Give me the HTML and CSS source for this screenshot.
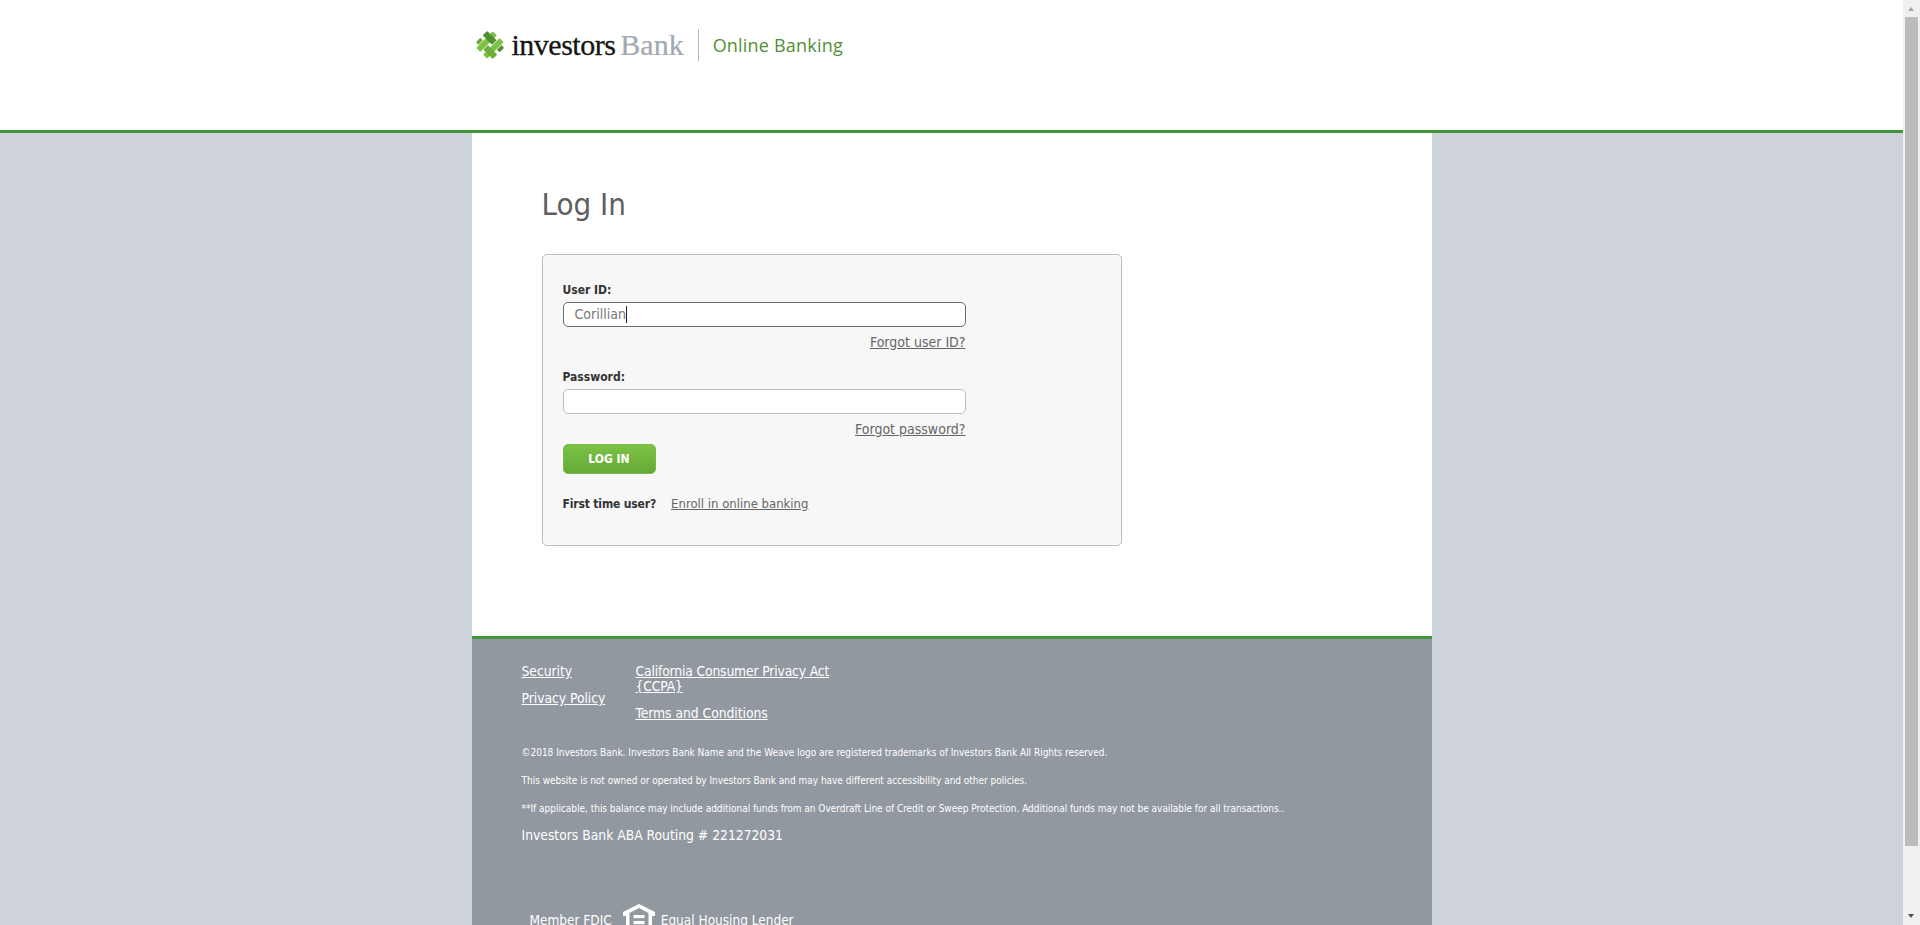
FILE: index.html
```html
<!DOCTYPE html>
<html lang="en">
<head>
<meta charset="utf-8">
<title>Investors Bank Online Banking - Log In</title>
<link rel="stylesheet" href="styles.css">
</head>
<body>
<div class="window">
  <div class="page">
    <header class="topbar">
      <div class="column brand">
        <svg class="weave" viewBox="0 0 30 30" aria-hidden="true">
          <g transform="rotate(45 15 15)">
            <rect x="3" y="7" width="24" height="6.4" rx="1.2" fill="#4f8f2f"/>
            <rect x="3" y="16.6" width="24" height="6.4" rx="1.2" fill="#6cae39"/>
            <rect x="16.6" y="3" width="6.4" height="24" rx="1.2" fill="#7dc242" stroke="#fff" stroke-width="0.8"/>
            <rect x="7" y="3" width="6.4" height="24" rx="1.2" fill="#7dc242" stroke="#fff" stroke-width="0.8"/>
            <rect x="6.4" y="7" width="7.6" height="6.4" fill="#4f8f2f"/>
            <rect x="16" y="16.6" width="7.6" height="6.4" fill="#6cae39"/>
          </g>
        </svg>
        <span class="wordmark"><span class="wm-dark">investors</span><span class="wm-grey">Bank</span></span>
        <span class="divider"></span>
        <span class="product">Online Banking</span>
      </div>
    </header>
    <main class="column content">
      <h1 class="title">Log In</h1>
      <form class="card">
        <label class="label">User ID:</label>
        <div class="field field-focus"><span class="typed">Corillian</span><span class="caret"></span></div>
        <div class="forgot"><a href="#">Forgot user ID?</a></div>
        <label class="label label-second">Password:</label>
        <div class="field"></div>
        <div class="forgot"><a href="#">Forgot password?</a></div>
        <button class="login" type="button">LOG IN</button>
        <div class="first"><strong>First time user?</strong><a href="#">Enroll in online banking</a></div>
      </form>
    </main>
    <footer class="column footer">
      <div class="links">
        <ul class="linkcol linkcol-a">
          <li><a href="#">Security</a></li>
          <li><a href="#">Privacy Policy</a></li>
        </ul>
        <ul class="linkcol linkcol-b">
          <li class="tight"><a href="#">California Consumer Privacy Act {CCPA}</a></li>
          <li><a href="#">Terms and Conditions</a></li>
        </ul>
      </div>
      <div class="legal-group">
        <p class="legal">©2018 Investors Bank. Investors Bank Name and the Weave logo are registered trademarks of Investors Bank All Rights reserved.</p>
        <p class="legal">This website is not owned or operated by Investors Bank and may have different accessibility and other policies.</p>
        <p class="legal">**If applicable, this balance may include additional funds from an Overdraft Line of Credit or Sweep Protection. Additional funds may not be available for all transactions..</p>
      </div>
      <p class="routing">Investors Bank ABA Routing # 221272031</p>
      <div class="badges">
        <span class="badge-text">Member FDIC</span>
        <svg class="ehl" viewBox="0 0 32 28" aria-hidden="true">
          <path d="M16 0 L32 8 V12 H29 V28 H3 V12 H0 V8 Z M16 4 L6.5 9 V24.5 H25.5 V9 Z" fill="#fff" fill-rule="evenodd"/>
          <rect x="10.5" y="11" width="11" height="3.2" fill="#fff"/>
          <rect x="10.5" y="17" width="11" height="3.2" fill="#fff"/>
        </svg>
        <span class="badge-text">Equal Housing Lender</span>
      </div>
    </footer>
  </div>
  <div class="scrollbar" aria-hidden="true">
    <div class="arrow arrow-up"></div>
    <div class="track"><div class="thumb"></div></div>
    <div class="arrow arrow-down"></div>
  </div>
</div>
</body>
</html>
```
FILE: styles.css
```css
* { box-sizing: border-box; }
html, body { margin: 0; padding: 0; height: 100%; overflow: hidden; }
body { font-family: "DejaVu Sans", sans-serif; font-stretch: condensed; color: #333; font-size: 12px; }
a { color: inherit; }

.window { display: flex; height: 925px; overflow: hidden; }
.page { flex: 1; min-width: 0; height: 925px; overflow: hidden; background: #cdd2db; }
.column { width: 960px; margin: 0 auto; }

.topbar { height: 133px; background: #fff; border-bottom: 3px solid #43943c; }
.brand { display: flex; align-items: center; padding: 29px 0 0 3px; box-sizing: content-box; height: 32px; width: 957px; }
.weave { width: 30px; height: 30px; flex: none; }
.wordmark { font-family: "Liberation Serif", serif; font-size: 30px; line-height: 32px; margin-left: 7px; font-stretch: normal; }
.wm-dark { color: #141414; letter-spacing: -0.5px; -webkit-text-stroke: 0.3px #141414; }
.wm-grey { color: #a3a9b0; margin-left: 5px; -webkit-text-stroke: 0.2px #a3a9b0; }
.divider { width: 1px; height: 32px; background: #b5babf; margin-left: 14px; }
.product { font-family: "Open Sans", sans-serif; font-stretch: normal; font-size: 18px; letter-spacing: 0.2px; color: #4f9134; margin-left: 14px; }

.content { background: #fff; padding: 51px 70px 0; height: 503px; }
.title { margin: 0; font-size: 31px; line-height: 40px; font-weight: 400; color: #5f5f5f; }
.card { width: 580px; height: 292px; margin-top: 30px; padding: 27px 20px 0; background: #f7f7f7; border: 1px solid #bdbdbd; border-radius: 5px; }
.label { display: block; font-weight: 700; font-size: 12px; line-height: 16px; color: #333; }
.label-second { margin-top: 19px; }
.field { width: 403px; height: 25px; margin-top: 4px; padding-left: 11px; background: #fff; border: 1px solid #bdbdbd; border-radius: 5px; font-size: 14px; line-height: 23px; color: #777; display: flex; align-items: center; }
.field-focus { border-color: #6b6b6b; }
.caret { width: 1px; height: 17px; background: #222; }
.forgot { width: 403px; margin-top: 7px; text-align: right; font-size: 14px; line-height: 16px; color: #666; }
.login { display: block; width: 93px; height: 30px; margin-top: 7px; padding: 0; border: 1px solid #78b947; border-radius: 5px; background: linear-gradient(#7cc245, #66a936); color: #fff; font-family: inherit; font-stretch: condensed; font-size: 12px; font-weight: 700; }
.first { display: flex; margin-top: 22px; font-size: 13px; line-height: 16px; color: #666; }
.first strong { font-size: 12px; letter-spacing: -0.15px; color: #333; margin-right: 15px; }

.footer { background: #92989f; border-top: 3px solid #43943c; padding: 25px 50px 0; height: 400px; color: #fff; }
.links { display: flex; }
.linkcol { list-style: none; margin: 0; padding: 0; font-size: 13.8px; line-height: 15px; letter-spacing: -0.05px; }
.linkcol li { margin-bottom: 12px; }
.linkcol li:last-child { margin-bottom: 0; }
.linkcol .tight { letter-spacing: -0.17px; }
.linkcol-a { width: 114px; }
.linkcol-b { width: 200px; }
.legal-group { display: flex; flex-direction: column; gap: 13px; margin-top: 24px; }
.legal { margin: 0; font-size: 10px; line-height: 15px; letter-spacing: -0.02px; }
.routing { margin: 10px 0 0; font-size: 13.75px; line-height: 18px; }
.badges { display: flex; align-items: flex-start; margin-top: 60px; margin-left: 8px; font-size: 13.5px; line-height: 18px; }
.badge-text { margin-top: 7px; }
.ehl { width: 32px; height: 28px; flex: none; margin: 0 6px 0 11px; }

.scrollbar { width: 17px; flex: none; height: 925px; background: #f0f0f0; display: flex; flex-direction: column; }
.arrow { height: 17px; flex: none; position: relative; }
.arrow::after { content: ""; position: absolute; left: 5px; width: 0; height: 0; border-left: 3.5px solid transparent; border-right: 3.5px solid transparent; }
.arrow-up::after { top: 7px; border-bottom: 4px solid #a3a3a3; }
.arrow-down::after { top: 6px; border-top: 4px solid #505050; }
.track { flex: 1; padding: 0 2px; }
.thumb { height: 829px; background: #bcbcbc; }
```
